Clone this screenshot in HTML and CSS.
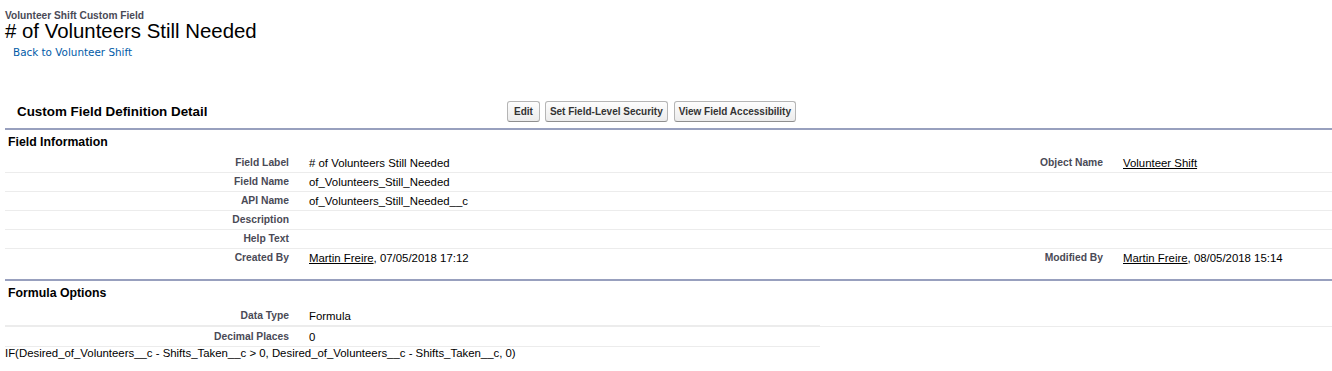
FILE: index.html
```html
<!DOCTYPE html>
<html lang="en">
<head>
    <meta charset="UTF-8" />
    <title># of Volunteers Still Needed - Custom Field</title>
    <link rel="stylesheet" href="styles.css">
</head>
<body>

<!-- Page title -->
<div class="page-title">
    <div class="page-type">Volunteer Shift Custom Field</div>
    <h1>#&nbsp;of Volunteers Still Needed</h1>
    <a class="breadcrumb" href="#">Back to Volunteer Shift</a>
</div>

<!-- Detail block -->
<div class="pb-header">
    <h2 class="pb-title">Custom Field Definition Detail</h2>
    <div class="pb-buttons">
        <button class="btn">Edit</button>
        <button class="btn">Set Field-Level Security</button>
        <button class="btn">View Field Accessibility</button>
    </div>
</div>

<div class="pb-section">
    <h3 class="pb-subheader">Field Information</h3>
    <table class="detail-list">
        <colgroup>
            <col class="col-label">
            <col class="col-data">
            <col class="col-label">
            <col>
        </colgroup>
        <tr>
            <td class="label">Field Label</td>
            <td class="data"># of Volunteers Still Needed</td>
            <td class="label">Object Name</td>
            <td class="data"><a href="#">Volunteer Shift</a></td>
        </tr>
        <tr>
            <td class="label">Field Name</td>
            <td class="data">of_Volunteers_Still_Needed</td>
            <td class="label"></td>
            <td class="data"></td>
        </tr>
        <tr>
            <td class="label">API Name</td>
            <td class="data">of_Volunteers_Still_Needed__c</td>
            <td class="label"></td>
            <td class="data"></td>
        </tr>
        <tr>
            <td class="label">Description</td>
            <td class="data"></td>
            <td class="label"></td>
            <td class="data"></td>
        </tr>
        <tr>
            <td class="label">Help Text</td>
            <td class="data"></td>
            <td class="label"></td>
            <td class="data"></td>
        </tr>
        <tr>
            <td class="label">Created By</td>
            <td class="data"><a href="#">Martin Freire</a>, 07/05/2018 17:12</td>
            <td class="label">Modified By</td>
            <td class="data"><a href="#">Martin Freire</a>, 08/05/2018 15:14</td>
        </tr>
    </table>
</div>

<div class="pb-section formula">
    <h3 class="pb-subheader">Formula Options</h3>
    <table class="detail-list narrow">
        <colgroup>
            <col class="col-label">
            <col>
        </colgroup>
        <tr>
            <td class="label">Data Type</td>
            <td class="data">Formula</td>
        </tr>
    </table>
    <div class="divider">
        <table class="detail-list narrow">
            <colgroup>
                <col class="col-label">
                <col>
            </colgroup>
            <tr>
                <td class="label">Decimal Places</td>
                <td class="data">0</td>
            </tr>
        </table>
    </div>
    <div class="formula-text">IF(Desired_of_Volunteers__c - Shifts_Taken__c &gt; 0, Desired_of_Volunteers__c - Shifts_Taken__c, 0)</div>
</div>

</body>
</html>
```

FILE: styles.css
```css
body {
    margin: 0;
    padding: 0 0 0 5px;
    font-family: "Liberation Sans", Arial, sans-serif;
    color: #000;
    background: #fff;
}

/* Page title */
.page-title {
    padding-top: 10px;
}

.page-type {
    font-size: 10.2px;
    font-weight: bold;
    line-height: 12px;
    color: #4a4a56;
}

h1 {
    margin: 0;
    font-size: 20.4px;
    font-weight: normal;
    line-height: 18px;
}

.breadcrumb {
    display: inline-block;
    margin: 6px 0 0 8px;
    font-family: "DejaVu Sans", Verdana, sans-serif;
    font-size: 10.4px;
    line-height: 12px;
    color: #015ba7;
    text-decoration: none;
}

/* Block header */
.pb-header {
    display: flex;
    align-items: center;
    margin-top: 41px;
    padding-bottom: 6px;
}

.pb-title {
    margin: 0;
    width: 490px;
    padding-left: 12px;
    font-size: 13.4px;
    line-height: 16px;
}

.pb-buttons {
    display: flex;
    gap: 5px;
}

.btn {
    height: 21px;
    margin: 0;
    padding: 0 4px;
    font-family: "Liberation Sans", Arial, sans-serif;
    font-size: 10px;
    font-weight: bold;
    line-height: 19px;
    color: #333;
    background: linear-gradient(to bottom, #fdfdfd, #ececec);
    border: 1px solid #b5b5b5;
    border-bottom-color: #8f8f8f;
    border-radius: 3px;
    cursor: pointer;
}

.btn:first-child {
    padding: 0 6px;
}

.btn + .btn + .btn {
    margin-left: 1px;
}

/* Sections */
.pb-section {
    border-top: 2px solid #98a0be;
}

.pb-section.formula {
    margin-top: 12px;
}

.pb-subheader {
    margin: 0;
    padding: 5px 3px 4px;
    font-size: 12.3px;
    line-height: 15px;
    color: #000;
}

.formula .pb-subheader {
    padding-bottom: 6px;
}

.detail-list {
    width: 100%;
    border-collapse: collapse;
    table-layout: fixed;
}

.detail-list.narrow {
    width: 815px;
}

.col-label {
    width: 294px;
}

.col-data {
    width: 520px;
}

.detail-list td {
    padding: 2px 10px;
    line-height: 14px;
    height: 14px;
    border-bottom: 1px solid #ececec;
    vertical-align: middle;
    white-space: nowrap;
}

.detail-list tr:last-child td {
    border-bottom: none;
}

.detail-list.narrow tr:last-child td {
    border-bottom: 1px solid #ececec;
}

.detail-list td.label {
    padding-left: 2px;
    text-align: right;
    font-size: 10.3px;
    font-weight: bold;
    color: #4a4a56;
}

.detail-list td.data {
    font-size: 11.4px;
    color: #000;
}

.detail-list td.data a {
    color: #000;
    text-decoration: underline;
}

.divider {
    border-top: 1px solid #ececec;
}

.divider .detail-list td {
    padding-top: 3px;
}

.formula-text {
    margin-top: -1px;
    font-size: 11.4px;
    line-height: 14px;
}
```
